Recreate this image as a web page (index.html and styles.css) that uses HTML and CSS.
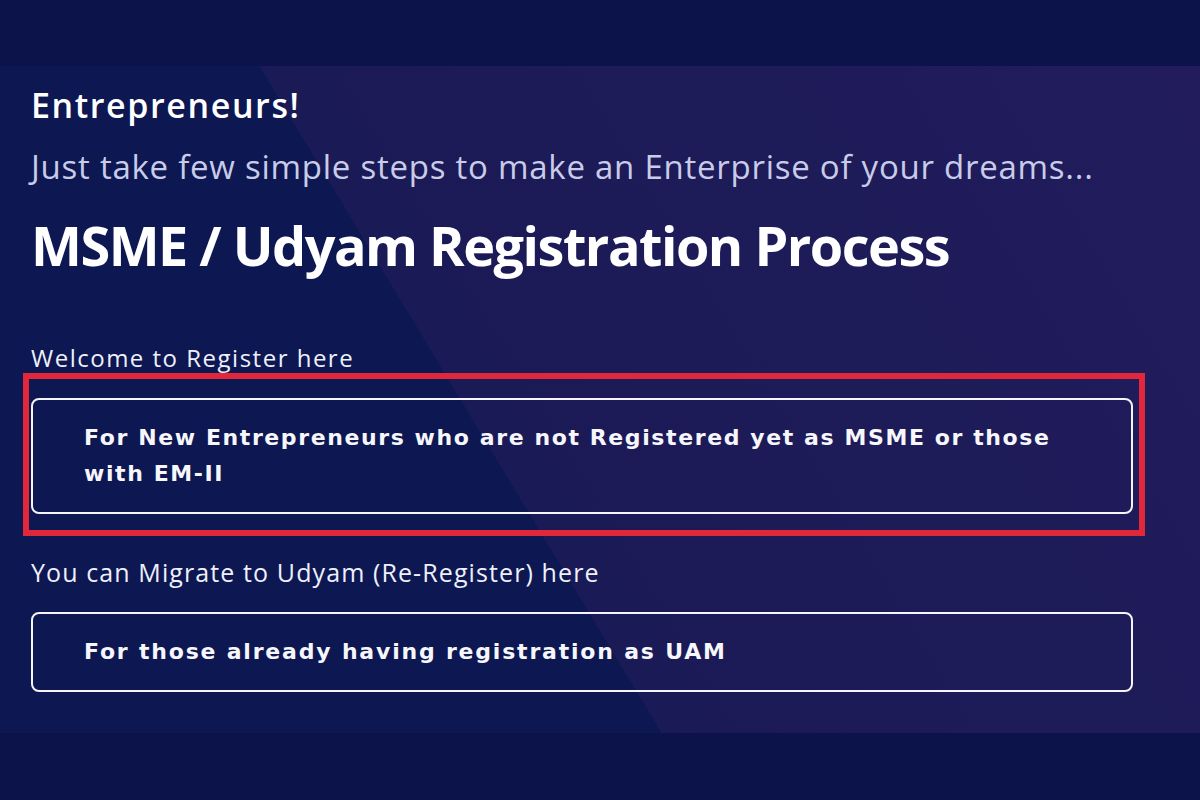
FILE: index.html
```html
<!DOCTYPE html>
<html lang="en">

<head>
    <meta charset="UTF-8">
    <meta name="viewport" content="width=device-width, initial-scale=1.0">
    <title>MSME / Udyam Registration</title>
    <link rel="stylesheet" href="styles.css">
</head>

<body>
    <div class="hero">
        <h3 class="hero-kicker">Entrepreneurs!</h3>
        <p class="hero-sub">Just take few simple steps to make an Enterprise of your dreams...</p>
        <h1 class="hero-title">MSME / Udyam Registration Process</h1>

        <!-- new registration -->
        <p class="reg-label first">Welcome to Register here</p>
        <div class="highlight">
            <a href="#" class="reg-btn">For New Entrepreneurs who are not Registered yet as MSME or those with EM&#8209;II</a>
        </div>

        <!-- migration -->
        <p class="reg-label second">You can Migrate to Udyam (Re-Register) here</p>
        <a href="#" class="reg-btn single">For those already having registration as UAM</a>
    </div>
</body>

</html>
```

FILE: styles.css
```css
* {
    margin: 0;
    padding: 0;
    box-sizing: border-box;
}

body {
    background-color: #0b134a;
    font-family: "Open Sans", "Noto Sans", sans-serif;
    color: white;
    padding-top: 66px;
    height: 800px;
    overflow: hidden;
}

.hero {
    height: 667px;
    padding: 19px 67px 0 31px;
    background: linear-gradient(58.9deg, #0d1752 41.3%, #1a1a56 41.3%, #221c5c 100%);
}

.hero-kicker {
    font-size: 34px;
    font-weight: 600;
    letter-spacing: 1.6px;
    line-height: 40px;
}

.hero-sub {
    font-size: 33px;
    color: #c9cce8;
    letter-spacing: 0.75px;
    line-height: 40px;
    margin-top: 22px;
}

.hero-title {
    font-size: 54px;
    font-weight: 700;
    font-stretch: 91%;
    letter-spacing: -1.5px;
    line-height: 64px;
    margin-top: 26px;
}

.reg-label {
    font-size: 24px;
    line-height: 30px;
    letter-spacing: 1.5px;
    color: #eef0fa;
}

.reg-label.first {
    margin-top: 66px;
}

.reg-label.second {
    font-size: 25px;
    line-height: 32px;
    letter-spacing: 1.1px;
    margin-top: 20px;
}

.highlight {
    border: 6px solid #e0283a;
    margin: 0 -12px 0 -8px;
    padding: 19px 6px 16px 2px;
}

.reg-btn {
    display: block;
    border: 2px solid #f4f4fa;
    border-radius: 8px;
    padding: 20px 60px 20px 51px;
    font-family: "DejaVu Sans", sans-serif;
    font-size: 22px;
    font-weight: 700;
    letter-spacing: 1.6px;
    line-height: 36px;
    color: #f6f6fb;
    text-decoration: none;
}

.reg-btn.single {
    margin-top: 24px;
    padding: 20px 50px 20px 51px;
    letter-spacing: 1.8px;
}
```
